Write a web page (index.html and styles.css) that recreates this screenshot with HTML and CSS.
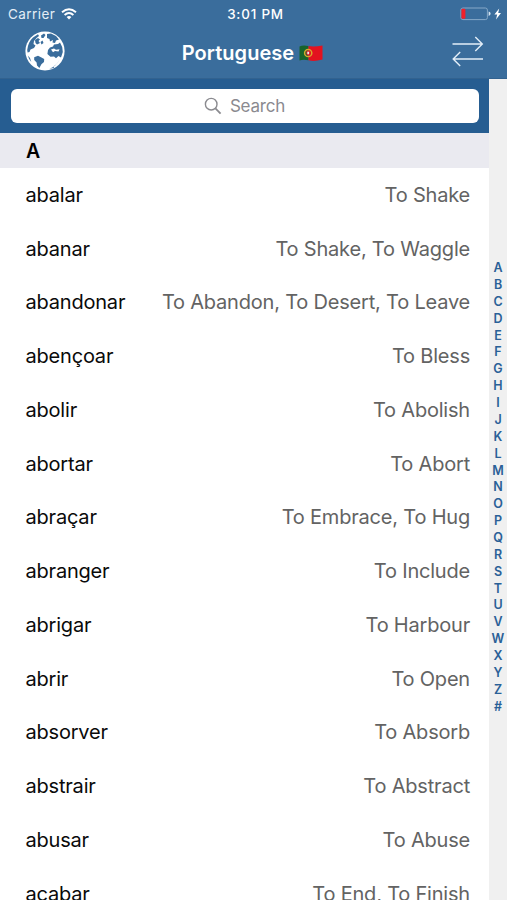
FILE: index.html
```html
<!DOCTYPE html>
<html lang="en">
<head>
<meta charset="utf-8">
<title>Portuguese verbs</title>
<link rel="stylesheet" href="styles.css">
</head>
<body>
<div class="app">
  <header class="top">
    <div class="status">
      <div class="status-left"><span class="carrier">Carrier</span>
        <svg class="wifi" width="16" height="12" viewBox="0 0 16 12" fill="none" stroke="#fff" stroke-width="1.9"><path d="M1 4.3Q8-2 15 4.3M3.6 7Q8 3 12.4 7"/><path d="M8 11.6 5.6 9.1Q8 7 10.4 9.1Z" fill="#fff" stroke="none"/></svg>
      </div>
      <div class="clock">3:01 PM</div>
      <div class="status-right">
        <svg width="42" height="14" viewBox="0 0 42 14"><rect x=".9" y="1" width="26.5" height="11.6" rx="2" fill="none" stroke="#86a9c8"/><rect x="1.4" y="1.8" width="4" height="10" rx="1" fill="#f0202b"/><path d="M28.6 4.6Q30.6 5.2 30.6 6.8T28.6 9Z" fill="#d5e5f2"/><path d="M39.2 1.4 34.4 7.6H37.2L36 12.4 41 6H38.2Z" fill="#fff"/></svg>
      </div>
    </div>
    <nav class="nav">
      <svg class="globe" width="40" height="40" viewBox="0 0 40 40"><circle cx="20" cy="20" r="19.6" fill="#fff"/><g fill="#3a6d9c"><path d="M2.2 19Q3 11 8 6.4L13 3.2 14 5 11.5 7 9 10 8.5 13 10.5 14.5 9 17 5.5 18.5 4.5 21 2.6 21.5Z"/><path d="M10 9 13 7 15 8.5 13.5 10 15 12 12 13.5 10.5 12ZM16 4.5 19 2.6 20.5 4 18.5 7 16.5 7ZM15.5 11 17.5 9.5 18.5 12 16.5 13.5Z"/><path d="M22 3 26 2.5 31 5 34 8.6 31 9.5 30 12 27.5 11.5 28 9 25 10.5 24.5 8 22 7Z"/><path d="M23 19 25 16.5 28 15.5 29 13.5 33 13 35 11.5 37.2 16 37.8 21 36 26.5 33.5 25 31 27.2 29 25.5 25.5 25.8 22.4 23Z"/><path d="M9.2 26.2 13 24.8 16 26.2 19.2 28 19 31 16.4 33.2 14.4 37 12 34.5 11.6 31.5 9.2 29Z"/><path d="M35 28 31.8 33 29 35 28.8 37 24.5 37.8Q31 35.8 35 28Z"/><path d="M2.8 24.5 5 27 6.3 31Q3.7 28 2.8 24.5Z"/></g><path d="M26 18.5 29 17.5 31 18.8 34.5 18.3 33.5 20.5 30 20 28 21.2Z" fill="#fff"/></svg>
      <h1 class="title">Portuguese
        <svg class="flag" width="24" height="18" viewBox="0 0 24 18"><path d="M.5 2.5Q4 .8 9.5 2V16.2Q4 15 .5 16.5Z" fill="#17642b"/><path d="M9.5 2Q15 3 23.5 1.5V15.5Q15 18 9.5 16.2Z" fill="#e3121f"/><circle cx="9.2" cy="9" r="3.6" fill="none" stroke="#d9a72c" stroke-width="1.5"/><path d="M7.4 6.7H11V9.8Q10.6 11.4 9.2 11.6 7.7 11.2 7.4 9.8Z" fill="#d9212b"/><path d="M8.3 7.7H10.1V9.8L9.2 10.6 8.3 9.8Z" fill="#eee"/></svg>
      </h1>
      <svg class="swap" width="32" height="31" viewBox="0 0 32 31" fill="none" stroke="#e3eef8" stroke-width="1.4"><path d="M.5 8H30M23.3 1 30.3 8 23.3 15M31 23H1.5M8.2 16 1.2 23 8.2 30"/></svg>
    </nav>
  </header>
  <div class="body">
    <main class="list">
      <div class="searchbar"><div class="field">
        <svg width="18" height="18" viewBox="0 0 18 18" fill="none" stroke="#8a8a8f" stroke-width="1.4"><circle cx="7.2" cy="7.2" r="5.8"/><path d="M11.4 11.4 16.6 16.6" stroke-width="1.8"/></svg>
        <span class="placeholder">Search</span></div></div>
      <h2 class="section">A</h2>
      <div class="row"><span class="verb">abalar</span><span class="meaning">To Shake</span></div>
      <div class="row"><span class="verb">abanar</span><span class="meaning">To Shake, To Waggle</span></div>
      <div class="row"><span class="verb">abandonar</span><span class="meaning">To Abandon, To Desert, To Leave</span></div>
      <div class="row"><span class="verb">abençoar</span><span class="meaning">To Bless</span></div>
      <div class="row"><span class="verb">abolir</span><span class="meaning">To Abolish</span></div>
      <div class="row"><span class="verb">abortar</span><span class="meaning">To Abort</span></div>
      <div class="row"><span class="verb">abraçar</span><span class="meaning">To Embrace, To Hug</span></div>
      <div class="row"><span class="verb">abranger</span><span class="meaning">To Include</span></div>
      <div class="row"><span class="verb">abrigar</span><span class="meaning">To Harbour</span></div>
      <div class="row"><span class="verb">abrir</span><span class="meaning">To Open</span></div>
      <div class="row"><span class="verb">absorver</span><span class="meaning">To Absorb</span></div>
      <div class="row"><span class="verb">abstrair</span><span class="meaning">To Abstract</span></div>
      <div class="row"><span class="verb">abusar</span><span class="meaning">To Abuse</span></div>
      <div class="row"><span class="verb">acabar</span><span class="meaning">To End, To Finish</span></div>
    </main>
    <aside class="index">
      <span>A</span><span>B</span><span>C</span><span>D</span><span>E</span><span>F</span><span>G</span><span>H</span><span>I</span><span>J</span><span>K</span><span>L</span><span>M</span><span>N</span><span>O</span><span>P</span><span>Q</span><span>R</span><span>S</span><span>T</span><span>U</span><span>V</span><span>W</span><span>X</span><span>Y</span><span>Z</span><span>#</span>
    </aside>
  </div>
</div>
</body>
</html>
```
FILE: styles.css
```css
* { box-sizing: border-box; }
body { margin: 0; font-family: Inter, "Liberation Sans", sans-serif; background: #fff; }
svg { display: block; flex: none; }
.app { width: 507px; height: 900px; overflow: hidden; display: flex; flex-direction: column; }
.top { height: 79px; flex: none; background: #3a6d9c; color: #fff; border-bottom: 1px solid #32628f; }
.status { height: 27px; display: grid; grid-template-columns: 1fr auto 1fr; align-items: center; padding: 0 5px 0 8px; font-size: 13.5px; }
.status-left { display: flex; align-items: center; gap: 6px; }
.carrier { letter-spacing: 0.45px; color: #e3edf6; }
.clock { font-weight: 500; letter-spacing: 0.8px; font-size: 13.4px; padding-left: 1px; }
.status-right { display: flex; justify-content: flex-end; }
.nav { height: 51px; display: grid; grid-template-columns: 1fr auto 1fr; align-items: center; padding: 0 23px 0 25px; }
.globe { margin-bottom: 3px; }
.title { margin: 0 4px 0 0; display: flex; align-items: center; gap: 5px; font-size: 20px; font-weight: 600; letter-spacing: 0.05px; }
.swap { justify-self: end; margin-bottom: 3px; }
.body { flex: 1; min-height: 0; display: flex; }
.list { width: 489px; overflow: hidden; }
.searchbar { height: 54px; padding: 10px 10px 10px 11px; background: #265d91; }
.field { height: 34px; border-radius: 6px; background: #fff; display: flex; align-items: center; justify-content: center; gap: 8px; padding-right: 1px; color: #8a8a8f; font-size: 17px; letter-spacing: -0.2px; }
.section { margin: 0; height: 34.5px; padding-left: 26px; line-height: 36px; background: #eaeaf0; font-size: 19.5px; font-weight: 600; color: #000; }
.row { height: 53.75px; padding: 1px 19px 0 25.5px; display: flex; align-items: center; justify-content: space-between; font-size: 20px; white-space: nowrap; }
.verb { color: #0a0a0a; letter-spacing: -0.2px; }
.meaning { color: #636363; letter-spacing: -0.2px; }
.index { flex: 1; background: #f0f0f0; padding-top: 181.2px; display: flex; flex-direction: column; align-items: center; color: #2a6097; font-size: 12.5px; font-weight: 600; }
.index span { height: 16.87px; line-height: 16.87px; }
```
